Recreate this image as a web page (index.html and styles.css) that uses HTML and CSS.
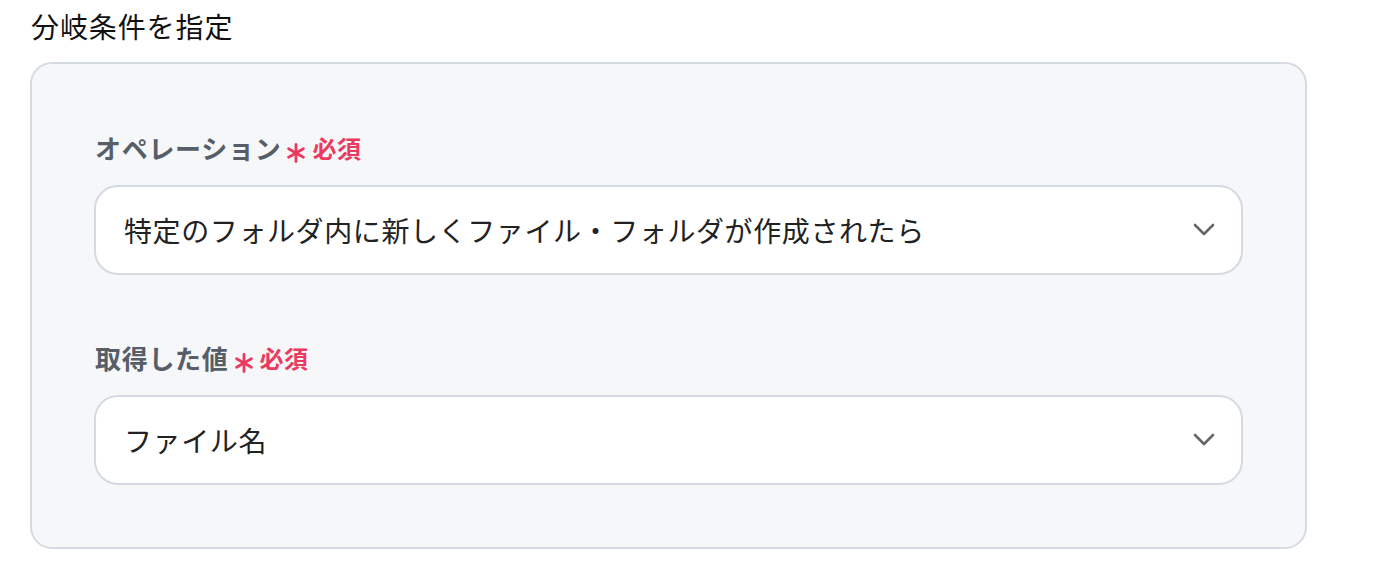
FILE: index.html
```html
<!DOCTYPE html>
<html lang="ja">
<head>
<meta charset="utf-8">
<link rel="stylesheet" href="styles.css">
</head>
<body>
<div class="page">
  <h2 class="title">分岐条件を指定</h2>
  <div class="panel">
    <div class="field">
      <div class="label">オペレーション<span class="req"><svg class="ast" width="22" height="22" viewBox="0 0 22 22"><g stroke="#ea3a5e" stroke-width="2.8" stroke-linecap="round"><path d="M11 2.5 V19.5"/><path d="M3.6 6.75 L18.4 15.25"/><path d="M3.6 15.25 L18.4 6.75"/></g></svg>必須</span></div>
      <div class="select">
        <span class="value">特定のフォルダ内に新しくファイル・フォルダが作成されたら</span>
        <svg class="chev" width="22" height="14" viewBox="0 0 22 14"><path d="M2 2 L11 11 L20 2" fill="none" stroke="#666" stroke-width="2.6" stroke-linecap="round" stroke-linejoin="round"/></svg>
      </div>
    </div>
    <div class="field">
      <div class="label">取得した値<span class="req"><svg class="ast" width="22" height="22" viewBox="0 0 22 22"><g stroke="#ea3a5e" stroke-width="2.8" stroke-linecap="round"><path d="M11 2.5 V19.5"/><path d="M3.6 6.75 L18.4 15.25"/><path d="M3.6 15.25 L18.4 6.75"/></g></svg>必須</span></div>
      <div class="select">
        <span class="value">ファイル名</span>
        <svg class="chev" width="22" height="14" viewBox="0 0 22 14"><path d="M2 2 L11 11 L20 2" fill="none" stroke="#666" stroke-width="2.6" stroke-linecap="round" stroke-linejoin="round"/></svg>
      </div>
    </div>
  </div>
</div>
</body>
</html>
```
FILE: styles.css
```css
* { box-sizing: border-box; }
html, body { margin: 0; padding: 0; background: #ffffff; }
body {
  font-family: "Noto Sans CJK JP", "Noto Sans", sans-serif;
  color: #1f1f1f;
}
.page {
  padding: 6px 0 0 30px;
  width: 1307px;
}
.title {
  margin: 0 0 16px 1px;
  font-size: 28px;
  font-weight: 400;
  line-height: 40px;
  letter-spacing: 0.9px;
  color: #111;
}
.panel {
  background: #f6f7f9;
  border: 2px solid #d6dae1;
  border-radius: 22px;
  padding: 68px 62px 62px 62px;
  display: flex;
  flex-direction: column;
  gap: 67px;
}
.field {
  display: flex;
  flex-direction: column;
  gap: 21px;
}
.label {
  font-size: 26px;
  font-weight: 700;
  line-height: 32px;
  letter-spacing: 0.7px;
  color: #575e68;
  display: flex;
  align-items: center;
  padding-left: 1px;
}
.req {
  display: inline-flex;
  align-items: center;
  color: #ea3a5e;
  font-size: 24px;
  font-weight: 700;
  letter-spacing: 0.5px;
  margin-left: 4px;
}
.ast {
  display: block;
  margin-right: 5px;
  position: relative;
  top: 5px;
}
.select {
  height: 90px;
  background: #ffffff;
  border: 2px solid #d5dae1;
  border-radius: 24px;
  display: flex;
  align-items: center;
  justify-content: space-between;
  padding: 0 26px 0 28px;
}
.value {
  font-size: 28px;
  line-height: 40px;
  letter-spacing: 0.6px;
  color: #222;
}
.chev { display: block; }
```
